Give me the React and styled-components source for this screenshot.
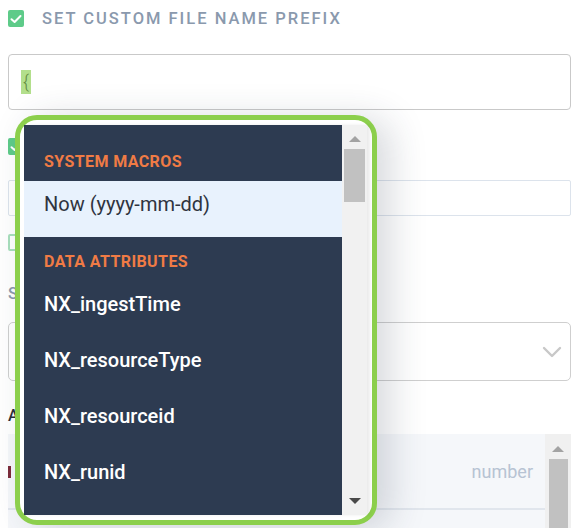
import React from 'react';
import styled, { createGlobalStyle } from 'styled-components';

const GlobalStyle = createGlobalStyle`
  html, body {
    margin: 0;
    padding: 0;
    background: #ffffff;
    font-family: Roboto, "Noto Sans", "Liberation Sans", sans-serif;
  }
`

const Page = styled.div`
  width: 579px;
  height: 528px;
  box-sizing: border-box;
  padding: 10px 8px 0 8px;
  overflow: hidden;
  display: flex;
  flex-direction: column;

  & > * {
    flex-shrink: 0;
  }
`

const CheckRow = styled.div`
  display: flex;
  align-items: center;
  gap: 18px;
  height: 17px;
  margin-top: ${props => props.top || 0}px;
`

const Checkbox = styled.div`
  width: 16px;
  height: 17px;
  box-sizing: border-box;
  border-radius: 2px;
  background: ${props => props.checked ? '#5ecb89' : '#ffffff'};
  border: 2px solid ${props => props.checked ? '#5ecb89' : '#a9dfbd'};
  display: flex;
  align-items: center;
  justify-content: center;
`

const CheckLabel = styled.span`
  font-size: 16.5px;
  font-weight: 500;
  letter-spacing: 2px;
  color: #8a99ad;
  text-transform: uppercase;
`

const Field = styled.div`
  position: relative;
  margin-top: ${props => props.top || 0}px;
`

const Input = styled.div`
  height: ${props => props.h}px;
  box-sizing: border-box;
  border: 1px solid ${props => props.light ? '#dce3ec' : '#c9c9c9'};
  border-radius: ${props => props.light ? 2 : 4}px;
  display: flex;
  align-items: center;
  padding-left: ${props => props.light ? 9 : 12}px;
  font-size: 18px;
  color: #222;
  margin-top: ${props => props.top || 0}px;
`

const Selected = styled.span`
  background: #b3df8c;
  color: #5f8a3e;
  padding: 0 2px;
  line-height: 24px;
  font-weight: 300;
`

const FieldLabel = styled.div`
  margin-top: ${props => props.top}px;
  font-size: 16px;
  font-weight: 500;
  letter-spacing: 1.2px;
  line-height: 18px;
  color: ${props => props.dark ? '#2a2f38' : '#8a99ad'};
`

const Select = styled.div`
  margin-top: 19px;
  height: 59px;
  box-sizing: border-box;
  border: 1px solid #cfcfcf;
  border-radius: 5px;
  display: flex;
  align-items: center;
  justify-content: flex-end;
  padding-right: 8px;
`

const Table = styled.div`
  margin-top: 9px;
  height: 100px;
  background: #f5f7fa;
  display: flex;
`

const TableBody = styled.div`
  flex: 1;
  display: flex;
  flex-direction: column;
`

const TableRow = styled.div`
  height: 76px;
  box-sizing: border-box;
  border-bottom: 2px solid #e1e6ed;
  display: flex;
  align-items: center;
  justify-content: space-between;
  padding-right: 12px;
`

const Swatch = styled.div`
  width: 3px;
  height: 12px;
  margin-top: 2px;
  background: #7c2b3b;
`

const TypeText = styled.span`
  font-size: 18px;
  color: #b7c3d3;
`

const TableScroll = styled.div`
  width: 26px;
  background: #f0f0f0;
  display: flex;
  flex-direction: column;
  align-items: center;
  padding-top: 0;
`

const MenuFrame = styled.div`
  position: absolute;
  top: calc(100% + 5px);
  left: 7px;
  width: 362px;
  box-sizing: border-box;
  border: 5px solid #8ccf4c;
  border-radius: 22px;
  padding: 5px 5px 5px 4px;
  background: #ffffff;
  box-shadow: 14px 4px 36px rgba(40, 50, 70, 0.18);
  z-index: 10;
`

const MenuInner = styled.div`
  height: 390px;
  display: flex;
  box-shadow: 3px 0 3px rgba(0, 0, 0, 0.08);
`

const MenuList = styled.div`
  flex: 1;
  background: #2d3b51;
  padding-top: 12px;
  overflow: hidden;
`

const GroupHeader = styled.div`
  height: 44px;
  box-sizing: border-box;
  padding: 15px 0 0 20px;
  line-height: 20px;
  font-size: 16px;
  font-weight: 700;
  color: #f07b45;
  letter-spacing: 0.4px;
`

const Item = styled.div`
  height: 56px;
  box-sizing: border-box;
  padding: 12px 0 0 20px;
  line-height: 22px;
  font-size: 20px;
  font-weight: ${props => props.active ? 400 : 500};
  color: ${props => props.active ? '#2f3440' : '#ffffff'};
  background: ${props => props.active ? '#e8f2fd' : 'transparent'};
`

const ScrollBar = styled.div`
  width: 25px;
  background: #f1f1f1;
  display: flex;
  flex-direction: column;
  align-items: center;
`

const Arrow = styled.div`
  width: 0;
  height: 0;
  border-left: 6px solid transparent;
  border-right: 6px solid transparent;
  border-${props => props.down ? 'top' : 'bottom'}: 6px solid ${props => props.down ? '#4a4a4a' : '#a3a3a3'};
  margin: ${props => props.down ? 'auto 0 11px 0' : `${props.top || 11}px 0 0 0`};
`

const Thumb = styled.div`
  width: ${props => props.w || 21}px;
  height: ${props => props.h}px;
  margin-top: ${props => props.top || 0}px;
  background: #c1c1c1;
`

const Check = () => (
  <svg width="12" height="10" viewBox="0 0 12 10">
    <path d="M1.5 5.2 L4.6 8 L10.5 2" fill="none" stroke="#fff" strokeWidth="2" strokeLinecap="round" strokeLinejoin="round" />
  </svg>
)

const Chevron = () => (
  <svg width="20" height="12" viewBox="0 0 20 12">
    <path d="M2 2 L10 10 L18 2" fill="none" stroke="#c8c8c8" strokeWidth="2.4" strokeLinecap="round" strokeLinejoin="round" />
  </svg>
)

const groups = [
  { title: 'System Macros', items: ['Now (yyyy-mm-dd)'], active: 0 },
  { title: 'Data Attributes', items: ['NX_ingestTime', 'NX_resourceType', 'NX_resourceid', 'NX_runid'] },
]

const App = () => {
  return (
    <>
      <GlobalStyle />
      <Page>
        <CheckRow>
          <Checkbox checked><Check /></Checkbox>
          <CheckLabel>Set custom file name prefix</CheckLabel>
        </CheckRow>
        <Field top={27}>
          <Input h={56}><Selected>{'{'}</Selected></Input>
          <MenuFrame>
            <MenuInner>
              <MenuList>
                {groups.map(group => (
                  <div key={group.title}>
                    <GroupHeader>{group.title.toUpperCase()}</GroupHeader>
                    {group.items.map((item, index) => (
                      <Item key={item} active={group.active === index}>{item}</Item>
                    ))}
                  </div>
                ))}
              </MenuList>
              <ScrollBar>
                <Arrow />
                <Thumb h={53} top={7} />
                <Arrow down />
              </ScrollBar>
            </MenuInner>
          </MenuFrame>
        </Field>
        <CheckRow top={28}>
          <Checkbox checked><Check /></Checkbox>
        </CheckRow>
        <Input h={36} light top={25}>4</Input>
        <CheckRow top={18}>
          <Checkbox />
        </CheckRow>
        <FieldLabel top={34}>SELECT</FieldLabel>
        <Select><Chevron /></Select>
        <FieldLabel dark top={26}>Attributes</FieldLabel>
        <Table>
          <TableBody>
            <TableRow>
              <Swatch />
              <TypeText>number</TypeText>
            </TableRow>
          </TableBody>
          <TableScroll>
            <Arrow top={12} />
            <Thumb w={19} h={80} top={7} />
          </TableScroll>
        </Table>
      </Page>
    </>
  )
}

export default App;
